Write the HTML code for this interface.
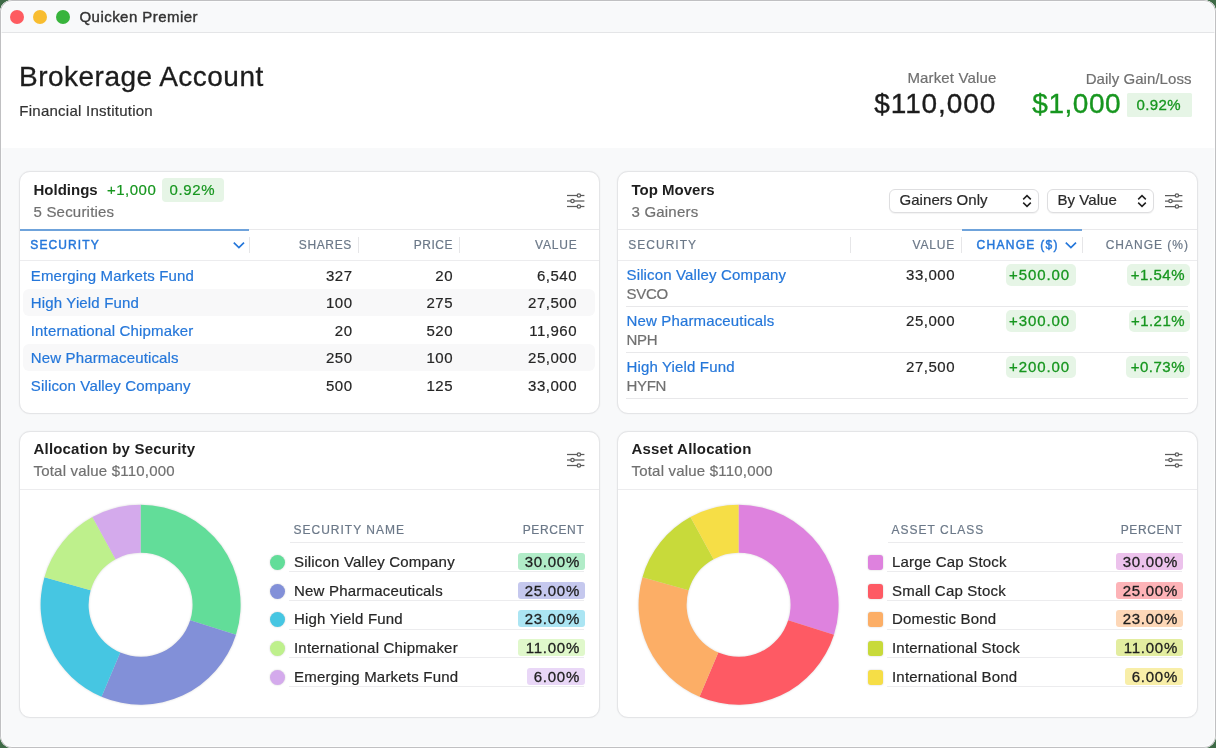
<!DOCTYPE html>
<html><head><meta charset="utf-8"><style>
html,body{margin:0;padding:0;width:1216px;height:748px;overflow:hidden;background:#3e6a46;}
#win{position:absolute;left:0;top:0;width:1216px;height:748px;border-radius:12px;overflow:hidden;background:#f8f9fa;}
.t{position:absolute;white-space:nowrap;font-family:"Liberation Sans", sans-serif;}
#win{will-change:transform}
</style></head><body><div id="win">
<div style="position:absolute;left:0;top:0;width:1216px;height:32px;background:#f8f9fa;border-bottom:1px solid #e4e5e7"></div>
<div style="position:absolute;left:10px;top:10px;width:14px;height:14px;border-radius:50%;background:#fe5b60"></div>
<div style="position:absolute;left:33px;top:10px;width:14px;height:14px;border-radius:50%;background:#f8bd30"></div>
<div style="position:absolute;left:56px;top:10px;width:14px;height:14px;border-radius:50%;background:#38b43c"></div>
<div class="t" style="left:79.50px;top:9.40px;font-size:15px;line-height:15px;color:#333333;font-weight:400;letter-spacing:0.45px;-webkit-text-stroke:0.4px #333333;">Quicken Premier</div>
<div style="position:absolute;left:0px;top:33px;width:1216px;height:115px;background:#fff"></div>
<div class="t" style="left:19.10px;top:63.00px;font-size:28px;line-height:28px;color:#1c1c1c;font-weight:400;letter-spacing:0.47px;-webkit-text-stroke:0.3px #1c1c1c;">Brokerage Account</div>
<div class="t" style="left:19.30px;top:103.10px;font-size:15px;line-height:15px;color:#333;font-weight:400;letter-spacing:0.25px;-webkit-text-stroke:0.2px #333;">Financial Institution</div>
<div class="t" style="right:219.50px;top:70.20px;font-size:15px;line-height:15px;color:#707070;font-weight:400;letter-spacing:0.15px;-webkit-text-stroke:0.2px #707070;">Market Value</div>
<div class="t" style="right:219.80px;top:89.50px;font-size:28px;line-height:28px;color:#1c1c1c;font-weight:400;letter-spacing:0.9px;-webkit-text-stroke:0.35px #1c1c1c;">$110,000</div>
<div class="t" style="right:24.50px;top:70.50px;font-size:15px;line-height:15px;color:#707070;font-weight:400;letter-spacing:0.05px;-webkit-text-stroke:0.2px #707070;">Daily Gain/Loss</div>
<div class="t" style="left:1032.30px;top:89.80px;font-size:28px;line-height:28px;color:#17961f;font-weight:400;letter-spacing:0.55px;-webkit-text-stroke:0.35px #17961f;">$1,000</div>
<div style="position:absolute;left:1127px;top:93px;width:65px;height:24px;background:#e6f5e6;border-radius:1.5px"></div>
<div class="t" style="left:1136.50px;top:97.30px;font-size:15px;line-height:15px;color:#17961f;font-weight:400;letter-spacing:0.4px;-webkit-text-stroke:0.3px #17961f">0.92%</div>
<div style="position:absolute;left:19px;top:171px;width:581px;height:243px;box-sizing:border-box;border:1px solid #e4e5e7;border-radius:11px;background:#fff;box-shadow:0 0 1.5px rgba(0,0,0,0.07)"></div>
<div class="t" style="left:33.50px;top:182.40px;font-size:15px;line-height:15px;color:#1e1e1e;font-weight:700;letter-spacing:0px;">Holdings</div>
<div class="t" style="left:107.00px;top:182.10px;font-size:15px;line-height:15px;color:#17961f;font-weight:400;letter-spacing:0.5px;-webkit-text-stroke:0.2px #17961f;">+1,000</div>
<div style="position:absolute;left:162px;top:178px;width:62px;height:24px;background:#e6f5e6;border-radius:4px"></div>
<div class="t" style="left:169.50px;top:182.10px;font-size:15px;line-height:15px;color:#17961f;font-weight:400;letter-spacing:0.65px;-webkit-text-stroke:0.2px #17961f;">0.92%</div>
<div class="t" style="left:33.50px;top:204.10px;font-size:15px;line-height:15px;color:#707070;font-weight:400;letter-spacing:0.2px;-webkit-text-stroke:0.2px #707070;">5 Securities</div>
<svg style="position:absolute;left:566px;top:193px" width="20" height="16" viewBox="0 0 20 16">
<g stroke="#5c5c5c" stroke-width="1.25" fill="none">
<line x1="1" y1="2.5" x2="18.4" y2="2.5"/><line x1="1" y1="8" x2="18.4" y2="8"/><line x1="1" y1="13.5" x2="18.4" y2="13.5"/>
<circle cx="12.9" cy="2.5" r="1.7" fill="#fff"/><circle cx="6.5" cy="8" r="1.7" fill="#fff"/><circle cx="12.9" cy="13.5" r="1.7" fill="#fff"/>
</g></svg>
<div style="position:absolute;left:20px;top:229px;width:579px;height:1px;background:#e9e9eb"></div>
<div style="position:absolute;left:20px;top:229px;width:229px;height:2px;background:#6fa3db"></div>
<div style="position:absolute;left:249px;top:236.5px;width:1px;height:16.5px;background:#e6e6e8"></div>
<div style="position:absolute;left:358px;top:236.5px;width:1px;height:16.5px;background:#e6e6e8"></div>
<div style="position:absolute;left:459px;top:236.5px;width:1px;height:16.5px;background:#e6e6e8"></div>
<div class="t" style="left:30.30px;top:239.04px;font-size:12px;line-height:12px;color:#2577da;font-weight:400;letter-spacing:1.1px;-webkit-text-stroke:0.45px #2577da;">SECURITY</div>
<svg style="position:absolute;left:231.5px;top:240px" width="14" height="10" viewBox="0 0 14 10"><polyline points="1.8,2.6 6.9,7.5 12,2.6" stroke="#2577da" stroke-width="1.7" fill="none"/></svg>
<div class="t" style="right:864.00px;top:239.04px;font-size:12px;line-height:12px;color:#6b7888;font-weight:400;letter-spacing:0.65px;-webkit-text-stroke:0.2px #6b7888;">SHARES</div>
<div class="t" style="right:763.00px;top:239.04px;font-size:12px;line-height:12px;color:#6b7888;font-weight:400;letter-spacing:0.5px;-webkit-text-stroke:0.2px #6b7888;">PRICE</div>
<div class="t" style="right:638.50px;top:239.04px;font-size:12px;line-height:12px;color:#6b7888;font-weight:400;letter-spacing:0.8px;-webkit-text-stroke:0.2px #6b7888;">VALUE</div>
<div style="position:absolute;left:20px;top:260px;width:579px;height:1px;background:#ececee"></div>
<div class="t" style="left:30.80px;top:267.60px;font-size:15px;line-height:15px;color:#2577da;font-weight:400;letter-spacing:0.15px;-webkit-text-stroke:0.2px #2577da;">Emerging Markets Fund</div>
<div class="t" style="right:863.50px;top:267.60px;font-size:15px;line-height:15px;color:#262626;font-weight:400;letter-spacing:0.5px;-webkit-text-stroke:0.2px #262626;">327</div>
<div class="t" style="right:763.00px;top:267.60px;font-size:15px;line-height:15px;color:#262626;font-weight:400;letter-spacing:0.5px;-webkit-text-stroke:0.2px #262626;">20</div>
<div class="t" style="right:639.00px;top:267.60px;font-size:15px;line-height:15px;color:#262626;font-weight:400;letter-spacing:0.5px;-webkit-text-stroke:0.2px #262626;">6,540</div>
<div style="position:absolute;left:23px;top:288.8px;width:572px;height:27px;background:#f8f8f9;border-radius:6px"></div>
<div class="t" style="left:30.80px;top:295.10px;font-size:15px;line-height:15px;color:#2577da;font-weight:400;letter-spacing:0.15px;-webkit-text-stroke:0.2px #2577da;">High Yield Fund</div>
<div class="t" style="right:863.50px;top:295.10px;font-size:15px;line-height:15px;color:#262626;font-weight:400;letter-spacing:0.5px;-webkit-text-stroke:0.2px #262626;">100</div>
<div class="t" style="right:763.00px;top:295.10px;font-size:15px;line-height:15px;color:#262626;font-weight:400;letter-spacing:0.5px;-webkit-text-stroke:0.2px #262626;">275</div>
<div class="t" style="right:639.00px;top:295.10px;font-size:15px;line-height:15px;color:#262626;font-weight:400;letter-spacing:0.5px;-webkit-text-stroke:0.2px #262626;">27,500</div>
<div class="t" style="left:30.80px;top:322.60px;font-size:15px;line-height:15px;color:#2577da;font-weight:400;letter-spacing:0.15px;-webkit-text-stroke:0.2px #2577da;">International Chipmaker</div>
<div class="t" style="right:863.50px;top:322.60px;font-size:15px;line-height:15px;color:#262626;font-weight:400;letter-spacing:0.5px;-webkit-text-stroke:0.2px #262626;">20</div>
<div class="t" style="right:763.00px;top:322.60px;font-size:15px;line-height:15px;color:#262626;font-weight:400;letter-spacing:0.5px;-webkit-text-stroke:0.2px #262626;">520</div>
<div class="t" style="right:639.00px;top:322.60px;font-size:15px;line-height:15px;color:#262626;font-weight:400;letter-spacing:0.5px;-webkit-text-stroke:0.2px #262626;">11,960</div>
<div style="position:absolute;left:23px;top:343.8px;width:572px;height:27px;background:#f8f8f9;border-radius:6px"></div>
<div class="t" style="left:30.80px;top:350.10px;font-size:15px;line-height:15px;color:#2577da;font-weight:400;letter-spacing:0.15px;-webkit-text-stroke:0.2px #2577da;">New Pharmaceuticals</div>
<div class="t" style="right:863.50px;top:350.10px;font-size:15px;line-height:15px;color:#262626;font-weight:400;letter-spacing:0.5px;-webkit-text-stroke:0.2px #262626;">250</div>
<div class="t" style="right:763.00px;top:350.10px;font-size:15px;line-height:15px;color:#262626;font-weight:400;letter-spacing:0.5px;-webkit-text-stroke:0.2px #262626;">100</div>
<div class="t" style="right:639.00px;top:350.10px;font-size:15px;line-height:15px;color:#262626;font-weight:400;letter-spacing:0.5px;-webkit-text-stroke:0.2px #262626;">25,000</div>
<div class="t" style="left:30.80px;top:377.60px;font-size:15px;line-height:15px;color:#2577da;font-weight:400;letter-spacing:0.15px;-webkit-text-stroke:0.2px #2577da;">Silicon Valley Company</div>
<div class="t" style="right:863.50px;top:377.60px;font-size:15px;line-height:15px;color:#262626;font-weight:400;letter-spacing:0.5px;-webkit-text-stroke:0.2px #262626;">500</div>
<div class="t" style="right:763.00px;top:377.60px;font-size:15px;line-height:15px;color:#262626;font-weight:400;letter-spacing:0.5px;-webkit-text-stroke:0.2px #262626;">125</div>
<div class="t" style="right:639.00px;top:377.60px;font-size:15px;line-height:15px;color:#262626;font-weight:400;letter-spacing:0.5px;-webkit-text-stroke:0.2px #262626;">33,000</div>
<div style="position:absolute;left:617px;top:171px;width:581px;height:243px;box-sizing:border-box;border:1px solid #e4e5e7;border-radius:11px;background:#fff;box-shadow:0 0 1.5px rgba(0,0,0,0.07)"></div>
<div class="t" style="left:631.50px;top:182.40px;font-size:15px;line-height:15px;color:#1e1e1e;font-weight:700;letter-spacing:0px;">Top Movers</div>
<div class="t" style="left:631.50px;top:204.10px;font-size:15px;line-height:15px;color:#707070;font-weight:400;letter-spacing:0.2px;-webkit-text-stroke:0.2px #707070;">3 Gainers</div>
<div style="position:absolute;left:889px;top:188.5px;width:150px;height:24px;box-sizing:border-box;border:1px solid #dedee0;border-radius:6px;background:#fff;box-shadow:0 1px 1px rgba(0,0,0,0.05)"></div>
<div class="t" style="left:899.50px;top:192.30px;font-size:15px;line-height:15px;color:#2a2a2a;font-weight:400;letter-spacing:0.05px;-webkit-text-stroke:0.2px #2a2a2a;">Gainers Only</div>
<svg style="position:absolute;left:1021.7px;top:194px" width="10" height="14" viewBox="0 0 10 14"><polyline points="1.2,5.4 5,1.6 8.8,5.4" stroke="#222" stroke-width="1.5" fill="none"/><polyline points="1.2,8.6 5,12.4 8.8,8.6" stroke="#222" stroke-width="1.5" fill="none"/></svg>
<div style="position:absolute;left:1047px;top:188.5px;width:107px;height:24px;box-sizing:border-box;border:1px solid #dedee0;border-radius:6px;background:#fff;box-shadow:0 1px 1px rgba(0,0,0,0.05)"></div>
<div class="t" style="left:1057.50px;top:192.30px;font-size:15px;line-height:15px;color:#2a2a2a;font-weight:400;letter-spacing:0.05px;-webkit-text-stroke:0.2px #2a2a2a;">By Value</div>
<svg style="position:absolute;left:1136.5px;top:194px" width="10" height="14" viewBox="0 0 10 14"><polyline points="1.2,5.4 5,1.6 8.8,5.4" stroke="#222" stroke-width="1.5" fill="none"/><polyline points="1.2,8.6 5,12.4 8.8,8.6" stroke="#222" stroke-width="1.5" fill="none"/></svg>
<svg style="position:absolute;left:1164px;top:193px" width="20" height="16" viewBox="0 0 20 16">
<g stroke="#5c5c5c" stroke-width="1.25" fill="none">
<line x1="1" y1="2.5" x2="18.4" y2="2.5"/><line x1="1" y1="8" x2="18.4" y2="8"/><line x1="1" y1="13.5" x2="18.4" y2="13.5"/>
<circle cx="12.9" cy="2.5" r="1.7" fill="#fff"/><circle cx="6.5" cy="8" r="1.7" fill="#fff"/><circle cx="12.9" cy="13.5" r="1.7" fill="#fff"/>
</g></svg>
<div style="position:absolute;left:618px;top:229px;width:579px;height:1px;background:#e9e9eb"></div>
<div style="position:absolute;left:962px;top:229px;width:120px;height:2px;background:#6fa3db"></div>
<div style="position:absolute;left:850px;top:236.5px;width:1px;height:16.5px;background:#e6e6e8"></div>
<div style="position:absolute;left:961px;top:236.5px;width:1px;height:16.5px;background:#e6e6e8"></div>
<div style="position:absolute;left:1082px;top:236.5px;width:1px;height:16.5px;background:#e6e6e8"></div>
<div class="t" style="left:628.30px;top:239.04px;font-size:12px;line-height:12px;color:#6b7888;font-weight:400;letter-spacing:1.0px;-webkit-text-stroke:0.2px #6b7888;">SECURITY</div>
<div class="t" style="right:261.00px;top:239.04px;font-size:12px;line-height:12px;color:#6b7888;font-weight:400;letter-spacing:0.8px;-webkit-text-stroke:0.2px #6b7888;">VALUE</div>
<div class="t" style="left:976.50px;top:239.04px;font-size:12px;line-height:12px;color:#2577da;font-weight:400;letter-spacing:1.3px;-webkit-text-stroke:0.45px #2577da;">CHANGE ($)</div>
<svg style="position:absolute;left:1064px;top:240px" width="14" height="10" viewBox="0 0 14 10"><polyline points="1.8,2.6 6.9,7.5 12,2.6" stroke="#2577da" stroke-width="1.7" fill="none"/></svg>
<div class="t" style="right:27.00px;top:239.04px;font-size:12px;line-height:12px;color:#6b7888;font-weight:400;letter-spacing:1.0px;-webkit-text-stroke:0.2px #6b7888;">CHANGE (%)</div>
<div style="position:absolute;left:618px;top:260px;width:579px;height:1px;background:#ececee"></div>
<div class="t" style="left:626.50px;top:267.10px;font-size:15px;line-height:15px;color:#2577da;font-weight:400;letter-spacing:0.15px;-webkit-text-stroke:0.2px #2577da;">Silicon Valley Company</div>
<div class="t" style="left:626.50px;top:286.00px;font-size:15px;line-height:15px;color:#707070;font-weight:400;letter-spacing:-0.3px;-webkit-text-stroke:0.2px #707070;">SVCO</div>
<div class="t" style="right:261.00px;top:267.30px;font-size:15px;line-height:15px;color:#262626;font-weight:400;letter-spacing:0.5px;-webkit-text-stroke:0.2px #262626;">33,000</div>
<div style="position:absolute;left:1005.5px;top:264px;width:70px;height:22px;background:#e6f5e6;border-radius:5px"></div>
<div class="t" style="right:146.00px;top:267.30px;font-size:15px;line-height:15px;color:#17961f;font-weight:400;letter-spacing:0.9px;-webkit-text-stroke:0.3px #17961f;">+500.00</div>
<div style="position:absolute;left:1127px;top:264px;width:63px;height:22px;background:#e6f5e6;border-radius:5px"></div>
<div class="t" style="right:31.00px;top:267.30px;font-size:15px;line-height:15px;color:#17961f;font-weight:400;letter-spacing:0.5px;-webkit-text-stroke:0.3px #17961f;">+1.54%</div>
<div style="position:absolute;left:626px;top:306px;width:562px;height:1px;background:#e8e8ea"></div>
<div class="t" style="left:626.50px;top:313.10px;font-size:15px;line-height:15px;color:#2577da;font-weight:400;letter-spacing:0.15px;-webkit-text-stroke:0.2px #2577da;">New Pharmaceuticals</div>
<div class="t" style="left:626.50px;top:332.00px;font-size:15px;line-height:15px;color:#707070;font-weight:400;letter-spacing:-0.3px;-webkit-text-stroke:0.2px #707070;">NPH</div>
<div class="t" style="right:261.00px;top:313.30px;font-size:15px;line-height:15px;color:#262626;font-weight:400;letter-spacing:0.5px;-webkit-text-stroke:0.2px #262626;">25,000</div>
<div style="position:absolute;left:1005.5px;top:310px;width:70px;height:22px;background:#e6f5e6;border-radius:5px"></div>
<div class="t" style="right:146.00px;top:313.30px;font-size:15px;line-height:15px;color:#17961f;font-weight:400;letter-spacing:0.9px;-webkit-text-stroke:0.3px #17961f;">+300.00</div>
<div style="position:absolute;left:1129px;top:310px;width:61px;height:22px;background:#e6f5e6;border-radius:5px"></div>
<div class="t" style="right:31.00px;top:313.30px;font-size:15px;line-height:15px;color:#17961f;font-weight:400;letter-spacing:0.45px;-webkit-text-stroke:0.3px #17961f;">+1.21%</div>
<div style="position:absolute;left:626px;top:352px;width:562px;height:1px;background:#e8e8ea"></div>
<div class="t" style="left:626.50px;top:359.10px;font-size:15px;line-height:15px;color:#2577da;font-weight:400;letter-spacing:0.15px;-webkit-text-stroke:0.2px #2577da;">High Yield Fund</div>
<div class="t" style="left:626.50px;top:378.00px;font-size:15px;line-height:15px;color:#707070;font-weight:400;letter-spacing:-0.3px;-webkit-text-stroke:0.2px #707070;">HYFN</div>
<div class="t" style="right:261.00px;top:359.30px;font-size:15px;line-height:15px;color:#262626;font-weight:400;letter-spacing:0.5px;-webkit-text-stroke:0.2px #262626;">27,500</div>
<div style="position:absolute;left:1005.5px;top:356px;width:70px;height:22px;background:#e6f5e6;border-radius:5px"></div>
<div class="t" style="right:146.00px;top:359.30px;font-size:15px;line-height:15px;color:#17961f;font-weight:400;letter-spacing:0.9px;-webkit-text-stroke:0.3px #17961f;">+200.00</div>
<div style="position:absolute;left:1126px;top:356px;width:64px;height:22px;background:#e6f5e6;border-radius:5px"></div>
<div class="t" style="right:31.00px;top:359.30px;font-size:15px;line-height:15px;color:#17961f;font-weight:400;letter-spacing:0.5px;-webkit-text-stroke:0.3px #17961f;">+0.73%</div>
<div style="position:absolute;left:626px;top:398px;width:562px;height:1px;background:#e8e8ea"></div>
<div style="position:absolute;left:19px;top:431px;width:581px;height:287px;box-sizing:border-box;border:1px solid #e4e5e7;border-radius:11px;background:#fff;box-shadow:0 0 1.5px rgba(0,0,0,0.07)"></div>
<div class="t" style="left:33.50px;top:441.30px;font-size:15px;line-height:15px;color:#1e1e1e;font-weight:700;letter-spacing:0.19px;">Allocation by Security</div>
<div class="t" style="left:33.50px;top:462.90px;font-size:15px;line-height:15px;color:#707070;font-weight:400;letter-spacing:0.2px;-webkit-text-stroke:0.2px #707070;">Total value $110,000</div>
<svg style="position:absolute;left:566px;top:452px" width="20" height="16" viewBox="0 0 20 16">
<g stroke="#5c5c5c" stroke-width="1.25" fill="none">
<line x1="1" y1="2.5" x2="18.4" y2="2.5"/><line x1="1" y1="8" x2="18.4" y2="8"/><line x1="1" y1="13.5" x2="18.4" y2="13.5"/>
<circle cx="12.9" cy="2.5" r="1.7" fill="#fff"/><circle cx="6.5" cy="8" r="1.7" fill="#fff"/><circle cx="12.9" cy="13.5" r="1.7" fill="#fff"/>
</g></svg>
<div style="position:absolute;left:20px;top:489px;width:579px;height:1px;background:#ececee"></div>
<div class="t" style="left:293.50px;top:523.84px;font-size:12px;line-height:12px;color:#6b7888;font-weight:400;letter-spacing:1.0px;-webkit-text-stroke:0.2px #6b7888;">SECURITY NAME</div>
<div class="t" style="right:631.70px;top:523.84px;font-size:12px;line-height:12px;color:#6b7888;font-weight:400;letter-spacing:0.6px;-webkit-text-stroke:0.2px #6b7888;">PERCENT</div>
<div style="position:absolute;left:290px;top:542px;width:295px;height:1px;background:#ebebed"></div>
<div style="position:absolute;left:269.5px;top:554.8px;width:15px;height:15px;background:#62dd99;border-radius:50%;box-shadow:0 0 2px rgba(0,0,0,0.2)"></div>
<div class="t" style="left:294.00px;top:553.80px;font-size:15px;line-height:15px;color:#262626;font-weight:400;letter-spacing:0.2px;-webkit-text-stroke:0.2px #262626;">Silicon Valley Company</div>
<div style="position:absolute;left:518px;top:552.8px;width:67px;height:17px;background:#b1ecc8;border-radius:3px"></div>
<div class="t" style="right:636.00px;top:553.80px;font-size:15px;line-height:15px;color:#1e1e1e;font-weight:400;letter-spacing:0.75px;-webkit-text-stroke:0.3px #1e1e1e;">30.00%</div>
<div style="position:absolute;left:289px;top:571.0px;width:295px;height:1px;background:#ececee"></div>
<div style="position:absolute;left:269.5px;top:583.55px;width:15px;height:15px;background:#8290d8;border-radius:50%;box-shadow:0 0 2px rgba(0,0,0,0.2)"></div>
<div class="t" style="left:294.00px;top:582.55px;font-size:15px;line-height:15px;color:#262626;font-weight:400;letter-spacing:0.2px;-webkit-text-stroke:0.2px #262626;">New Pharmaceuticals</div>
<div style="position:absolute;left:518px;top:581.55px;width:67px;height:17px;background:#c5c8ee;border-radius:3px"></div>
<div class="t" style="right:636.00px;top:582.55px;font-size:15px;line-height:15px;color:#1e1e1e;font-weight:400;letter-spacing:0.75px;-webkit-text-stroke:0.3px #1e1e1e;">25.00%</div>
<div style="position:absolute;left:289px;top:599.75px;width:295px;height:1px;background:#ececee"></div>
<div style="position:absolute;left:269.5px;top:612.3px;width:15px;height:15px;background:#46c6e2;border-radius:50%;box-shadow:0 0 2px rgba(0,0,0,0.2)"></div>
<div class="t" style="left:294.00px;top:611.30px;font-size:15px;line-height:15px;color:#262626;font-weight:400;letter-spacing:0.2px;-webkit-text-stroke:0.2px #262626;">High Yield Fund</div>
<div style="position:absolute;left:518px;top:610.3px;width:67px;height:17px;background:#abe5f3;border-radius:3px"></div>
<div class="t" style="right:636.00px;top:611.30px;font-size:15px;line-height:15px;color:#1e1e1e;font-weight:400;letter-spacing:0.75px;-webkit-text-stroke:0.3px #1e1e1e;">23.00%</div>
<div style="position:absolute;left:289px;top:628.5px;width:295px;height:1px;background:#ececee"></div>
<div style="position:absolute;left:269.5px;top:641.05px;width:15px;height:15px;background:#bef08c;border-radius:50%;box-shadow:0 0 2px rgba(0,0,0,0.2)"></div>
<div class="t" style="left:294.00px;top:640.05px;font-size:15px;line-height:15px;color:#262626;font-weight:400;letter-spacing:0.2px;-webkit-text-stroke:0.2px #262626;">International Chipmaker</div>
<div style="position:absolute;left:518px;top:639.05px;width:67px;height:17px;background:#e0f8cb;border-radius:3px"></div>
<div class="t" style="right:636.00px;top:640.05px;font-size:15px;line-height:15px;color:#1e1e1e;font-weight:400;letter-spacing:0.75px;-webkit-text-stroke:0.3px #1e1e1e;">11.00%</div>
<div style="position:absolute;left:289px;top:657.25px;width:295px;height:1px;background:#ececee"></div>
<div style="position:absolute;left:269.5px;top:669.8px;width:15px;height:15px;background:#d4aaec;border-radius:50%;box-shadow:0 0 2px rgba(0,0,0,0.2)"></div>
<div class="t" style="left:294.00px;top:668.80px;font-size:15px;line-height:15px;color:#262626;font-weight:400;letter-spacing:0.2px;-webkit-text-stroke:0.2px #262626;">Emerging Markets Fund</div>
<div style="position:absolute;left:527px;top:667.8px;width:58px;height:17px;background:#e9d7f7;border-radius:3px"></div>
<div class="t" style="right:636.00px;top:668.80px;font-size:15px;line-height:15px;color:#1e1e1e;font-weight:400;letter-spacing:0.75px;-webkit-text-stroke:0.3px #1e1e1e;">6.00%</div>
<div style="position:absolute;left:289px;top:686.0px;width:295px;height:1px;background:#ececee"></div>
<div style="position:absolute;left:617px;top:431px;width:581px;height:287px;box-sizing:border-box;border:1px solid #e4e5e7;border-radius:11px;background:#fff;box-shadow:0 0 1.5px rgba(0,0,0,0.07)"></div>
<div class="t" style="left:631.50px;top:441.30px;font-size:15px;line-height:15px;color:#1e1e1e;font-weight:700;letter-spacing:0.19px;">Asset Allocation</div>
<div class="t" style="left:631.50px;top:462.90px;font-size:15px;line-height:15px;color:#707070;font-weight:400;letter-spacing:0.2px;-webkit-text-stroke:0.2px #707070;">Total value $110,000</div>
<svg style="position:absolute;left:1164px;top:452px" width="20" height="16" viewBox="0 0 20 16">
<g stroke="#5c5c5c" stroke-width="1.25" fill="none">
<line x1="1" y1="2.5" x2="18.4" y2="2.5"/><line x1="1" y1="8" x2="18.4" y2="8"/><line x1="1" y1="13.5" x2="18.4" y2="13.5"/>
<circle cx="12.9" cy="2.5" r="1.7" fill="#fff"/><circle cx="6.5" cy="8" r="1.7" fill="#fff"/><circle cx="12.9" cy="13.5" r="1.7" fill="#fff"/>
</g></svg>
<div style="position:absolute;left:618px;top:489px;width:579px;height:1px;background:#ececee"></div>
<div class="t" style="left:891.50px;top:523.84px;font-size:12px;line-height:12px;color:#6b7888;font-weight:400;letter-spacing:1.0px;-webkit-text-stroke:0.2px #6b7888;">ASSET CLASS</div>
<div class="t" style="right:33.70px;top:523.84px;font-size:12px;line-height:12px;color:#6b7888;font-weight:400;letter-spacing:0.6px;-webkit-text-stroke:0.2px #6b7888;">PERCENT</div>
<div style="position:absolute;left:888px;top:542px;width:295px;height:1px;background:#ebebed"></div>
<div style="position:absolute;left:867.5px;top:554.8px;width:15px;height:15px;background:#de82de;border-radius:3px;box-shadow:0 0 2px rgba(0,0,0,0.2)"></div>
<div class="t" style="left:892.00px;top:553.80px;font-size:15px;line-height:15px;color:#262626;font-weight:400;letter-spacing:0.2px;-webkit-text-stroke:0.2px #262626;">Large Cap Stock</div>
<div style="position:absolute;left:1116px;top:552.8px;width:67px;height:17px;background:#ecc2ec;border-radius:3px"></div>
<div class="t" style="right:38.00px;top:553.80px;font-size:15px;line-height:15px;color:#1e1e1e;font-weight:400;letter-spacing:0.75px;-webkit-text-stroke:0.3px #1e1e1e;">30.00%</div>
<div style="position:absolute;left:887px;top:571.0px;width:295px;height:1px;background:#ececee"></div>
<div style="position:absolute;left:867.5px;top:583.55px;width:15px;height:15px;background:#fe5a64;border-radius:3px;box-shadow:0 0 2px rgba(0,0,0,0.2)"></div>
<div class="t" style="left:892.00px;top:582.55px;font-size:15px;line-height:15px;color:#262626;font-weight:400;letter-spacing:0.2px;-webkit-text-stroke:0.2px #262626;">Small Cap Stock</div>
<div style="position:absolute;left:1116px;top:581.55px;width:67px;height:17px;background:#fdb3b7;border-radius:3px"></div>
<div class="t" style="right:38.00px;top:582.55px;font-size:15px;line-height:15px;color:#1e1e1e;font-weight:400;letter-spacing:0.75px;-webkit-text-stroke:0.3px #1e1e1e;">25.00%</div>
<div style="position:absolute;left:887px;top:599.75px;width:295px;height:1px;background:#ececee"></div>
<div style="position:absolute;left:867.5px;top:612.3px;width:15px;height:15px;background:#fcae66;border-radius:3px;box-shadow:0 0 2px rgba(0,0,0,0.2)"></div>
<div class="t" style="left:892.00px;top:611.30px;font-size:15px;line-height:15px;color:#262626;font-weight:400;letter-spacing:0.2px;-webkit-text-stroke:0.2px #262626;">Domestic Bond</div>
<div style="position:absolute;left:1116px;top:610.3px;width:67px;height:17px;background:#fdd7b7;border-radius:3px"></div>
<div class="t" style="right:38.00px;top:611.30px;font-size:15px;line-height:15px;color:#1e1e1e;font-weight:400;letter-spacing:0.75px;-webkit-text-stroke:0.3px #1e1e1e;">23.00%</div>
<div style="position:absolute;left:887px;top:628.5px;width:295px;height:1px;background:#ececee"></div>
<div style="position:absolute;left:867.5px;top:641.05px;width:15px;height:15px;background:#c8da3a;border-radius:3px;box-shadow:0 0 2px rgba(0,0,0,0.2)"></div>
<div class="t" style="left:892.00px;top:640.05px;font-size:15px;line-height:15px;color:#262626;font-weight:400;letter-spacing:0.2px;-webkit-text-stroke:0.2px #262626;">International Stock</div>
<div style="position:absolute;left:1116px;top:639.05px;width:67px;height:17px;background:#e3eda0;border-radius:3px"></div>
<div class="t" style="right:38.00px;top:640.05px;font-size:15px;line-height:15px;color:#1e1e1e;font-weight:400;letter-spacing:0.75px;-webkit-text-stroke:0.3px #1e1e1e;">11.00%</div>
<div style="position:absolute;left:887px;top:657.25px;width:295px;height:1px;background:#ececee"></div>
<div style="position:absolute;left:867.5px;top:669.8px;width:15px;height:15px;background:#f6de46;border-radius:3px;box-shadow:0 0 2px rgba(0,0,0,0.2)"></div>
<div class="t" style="left:892.00px;top:668.80px;font-size:15px;line-height:15px;color:#262626;font-weight:400;letter-spacing:0.2px;-webkit-text-stroke:0.2px #262626;">International Bond</div>
<div style="position:absolute;left:1125px;top:667.8px;width:58px;height:17px;background:#f8eea8;border-radius:3px"></div>
<div class="t" style="right:38.00px;top:668.80px;font-size:15px;line-height:15px;color:#1e1e1e;font-weight:400;letter-spacing:0.75px;-webkit-text-stroke:0.3px #1e1e1e;">6.00%</div>
<div style="position:absolute;left:887px;top:686.0px;width:295px;height:1px;background:#ececee"></div>
<svg style="position:absolute;left:0;top:0;filter:drop-shadow(0 0 1px rgba(0,0,0,0.16))" width="1216" height="748"><path d="M140.60,504.70 A100,100 0 0 1 235.97,634.77 L190.19,620.34 A52,52 0 0 0 140.60,552.70 Z" fill="#62dd99"/><path d="M235.97,634.77 A100,100 0 0 1 101.53,696.75 L120.28,652.57 A52,52 0 0 0 190.19,620.34 Z" fill="#8290d8"/><path d="M101.53,696.75 A100,100 0 0 1 44.47,577.14 L90.61,590.37 A52,52 0 0 0 120.28,652.57 Z" fill="#46c6e2"/><path d="M44.47,577.14 A100,100 0 0 1 92.42,517.07 L115.55,559.13 A52,52 0 0 0 90.61,590.37 Z" fill="#bef08c"/><path d="M92.42,517.07 A100,100 0 0 1 140.60,504.70 L140.60,552.70 A52,52 0 0 0 115.55,559.13 Z" fill="#d4aaec"/></svg>
<svg style="position:absolute;left:0;top:0;filter:drop-shadow(0 0 1px rgba(0,0,0,0.16))" width="1216" height="748"><path d="M738.60,504.70 A100,100 0 0 1 833.97,634.77 L788.19,620.34 A52,52 0 0 0 738.60,552.70 Z" fill="#de82de"/><path d="M833.97,634.77 A100,100 0 0 1 699.53,696.75 L718.28,652.57 A52,52 0 0 0 788.19,620.34 Z" fill="#fe5a64"/><path d="M699.53,696.75 A100,100 0 0 1 642.47,577.14 L688.61,590.37 A52,52 0 0 0 718.28,652.57 Z" fill="#fcae66"/><path d="M642.47,577.14 A100,100 0 0 1 690.42,517.07 L713.55,559.13 A52,52 0 0 0 688.61,590.37 Z" fill="#c8da3a"/><path d="M690.42,517.07 A100,100 0 0 1 738.60,504.70 L738.60,552.70 A52,52 0 0 0 713.55,559.13 Z" fill="#f6de46"/></svg>
<div style="position:absolute;left:0;top:0;width:1216px;height:748px;border-radius:12px;box-shadow:inset 0 0 0 1px #c0c0c2, inset 0 0 0 2px rgba(255,255,255,0.6);pointer-events:none"></div>
</div></body></html>
